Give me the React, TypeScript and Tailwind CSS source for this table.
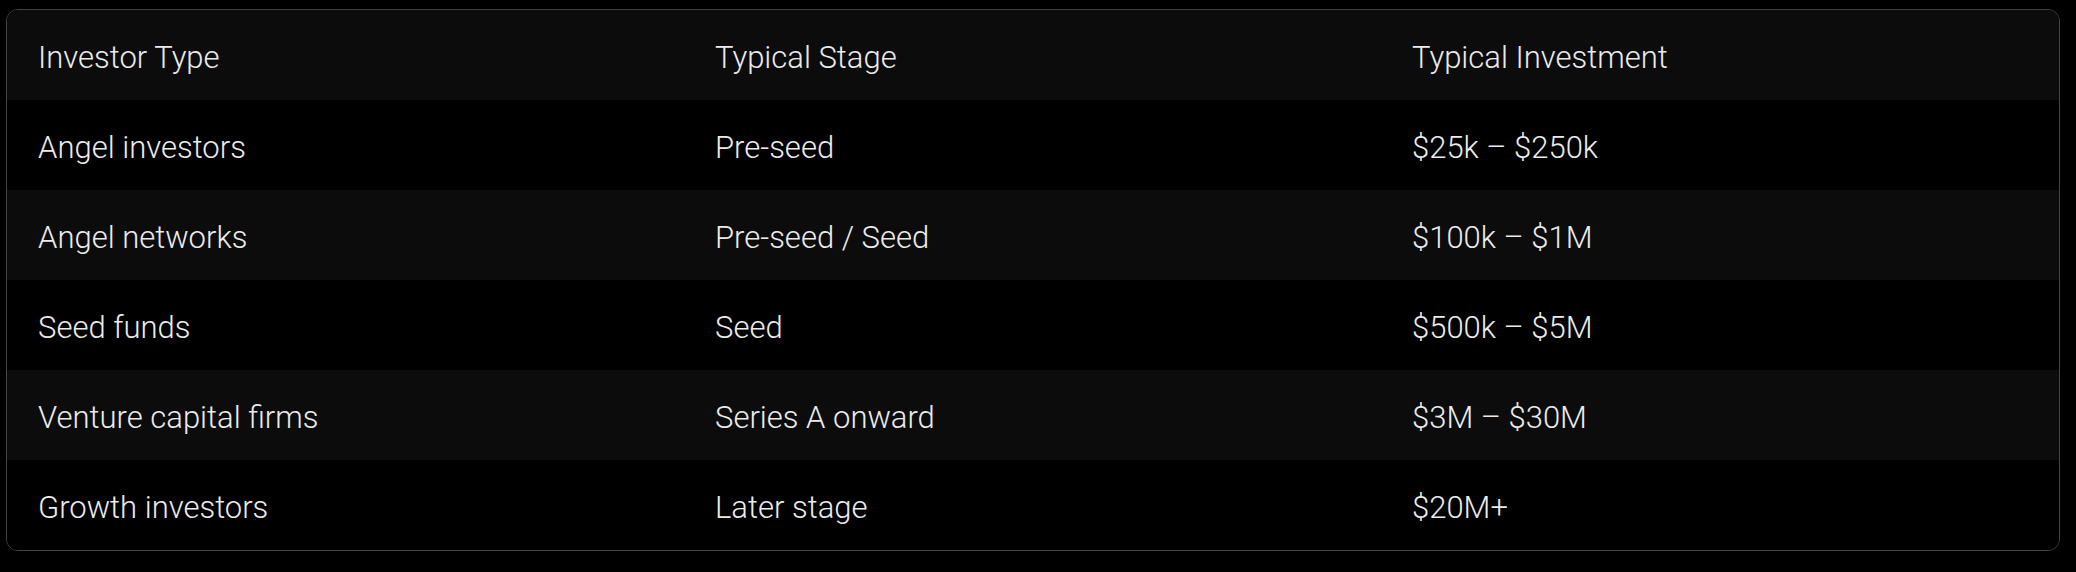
const rows = [
  { type: "Angel investors", stage: "Pre-seed", amount: "$25k – $250k" },
  { type: "Angel networks", stage: "Pre-seed / Seed", amount: "$100k – $1M" },
  { type: "Seed funds", stage: "Seed", amount: "$500k – $5M" },
  { type: "Venture capital firms", stage: "Series A onward", amount: "$3M – $30M" },
  { type: "Growth investors", stage: "Later stage", amount: "$20M+" },
];

const Row: React.FC<{ cells: string[]; shaded: boolean }> = ({ cells, shaded }) => (
  <div
    className={`grid h-[90px] grid-cols-[677px_697px_1fr] items-center pt-[6px] ${shaded ? "bg-[#0c0c0c]" : "bg-black"}`}
  >
    {cells.map((c, i) => (
      <div key={i} className="px-[31px]">
        {c}
      </div>
    ))}
  </div>
);

export default function App() {
  return (
    <div className="h-[572px] w-[2076px] bg-black pl-[6px] pt-[9px]">
      <div
        className="w-[2054px] overflow-hidden rounded-xl border border-[#444] text-[31px] font-light text-[#ebebeb]"
        style={{ fontFamily: "Roboto, 'Liberation Sans', sans-serif" }}
      >
        <Row cells={["Investor Type", "Typical Stage", "Typical Investment"]} shaded />
        {rows.map((r, i) => (
          <Row key={r.type} cells={[r.type, r.stage, r.amount]} shaded={i % 2 === 1} />
        ))}
      </div>
    </div>
  );
}
